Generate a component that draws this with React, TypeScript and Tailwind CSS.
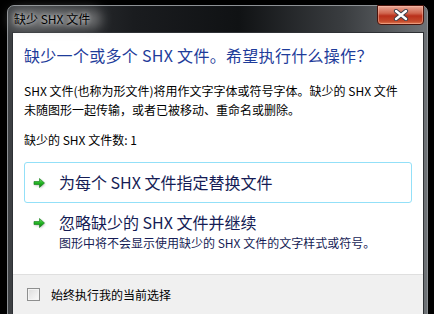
import React from 'react';

const cjk = { fontFamily: '"Noto Sans CJK SC", "Noto Sans", sans-serif' };

// green command-link arrow
function GoArrow() {
    return (
        <svg width="14" height="13" viewBox="0 0 14 13" className="shrink-0">
            <defs>
                <linearGradient id="ga" x1="0" y1="0" x2="0" y2="1">
                    <stop offset="0" stopColor="#6ee06a" />
                    <stop offset="0.5" stopColor="#22b422" />
                    <stop offset="1" stopColor="#0b7d12" />
                </linearGradient>
                <filter id="gs" x="-30%" y="-30%" width="160%" height="160%">
                    <feGaussianBlur stdDeviation="0.9" />
                </filter>
            </defs>
            <path d="M1.5 5.5h5.5V2.5l5 4.5-5 4.5V8.5H1.5z" fill="#9a9a9a" opacity="0.7" filter="url(#gs)" />
            <path d="M1 4.5h5.5V1.5l5 4.5-5 4.5V7.5H1z" fill="url(#ga)" stroke="#0e7a14" strokeWidth="0.6" />
        </svg>
    );
}

function CommandLink({ title, note, active }: { title: string; note?: string; active?: boolean }) {
    return (
        <div
            className={`flex items-start gap-[12px] rounded-[3px] border pl-[8px] pr-3 ${
                active ? 'border-[#93e0f8] py-[10px]' : 'border-transparent py-[6px]'
            }`}
        >
            <div className="pt-[4px]">
                <GoArrow />
            </div>
            <div className="flex flex-col text-[#151c55]">
                <span className="text-[16px] leading-[19px]">{title}</span>
                {note && <span className="mt-[3px] text-[12px] leading-[16px]">{note}</span>}
            </div>
        </div>
    );
}

export default function App() {
    return (
        <div className="h-[314px] w-[434px] overflow-hidden bg-black pl-[7px] pt-[5px]" style={cjk}>
            <div className="relative h-[320px] w-[421px] rounded-t-[7px] border border-[#8d9195] bg-[linear-gradient(90deg,#3e4144_0%,#1a1c1f_30%,#101214_55%,#3a3d40_80%,#6e7276_100%)]">
                {/* title bar */}
                <div className="relative flex h-[26px] items-center pl-[6px]">
                    <span className="absolute left-[2px] top-[3px] h-[20px] w-[92px] rounded-full bg-[#c8c8c8]/45 blur-[6px]" />
                    <span className="relative text-[12px] leading-[16px] text-black [text-shadow:0_0_4px_rgba(255,255,255,0.9)]">
                        缺少 SHX 文件
                    </span>
                </div>

                {/* close button */}
                <div className="absolute right-[3px] top-[-1px] flex h-[20px] w-[47px] items-center justify-center rounded-b-[4px] border border-[#4a140c] bg-[linear-gradient(180deg,#e9a795_0%,#d0664f_40%,#b9301b_55%,#c44a2c_85%,#e07a52_100%)] shadow-[inset_0_0_0_1px_rgba(255,200,180,0.45)]">
                    <svg width="16" height="12" viewBox="0 0 16 12">
                        <path d="M3 2l10 8M13 2L3 10" stroke="#3a3f4a" strokeWidth="4.2" strokeLinecap="round" />
                        <path d="M3 2l10 8M13 2L3 10" stroke="#ffffff" strokeWidth="2.4" strokeLinecap="round" />
                    </svg>
                </div>

                {/* client area */}
                <div className="pl-[4px] pr-[3px]">
                    <div className="flex h-[300px] flex-col border border-[#2e3135] bg-white">
                        <div className="flex flex-col px-[11px] pt-[11px]">
                            <div className="text-[16px] leading-[22px] text-[#1e3c9a] tracking-[0.3px]">
                                缺少一个或多个 SHX 文件。希望执行什么操作？
                            </div>
                            <div className="mt-[15px] text-[12px] leading-[19px] text-black">
                                <p>SHX 文件(也称为形文件)将用作文字字体或符号字体。缺少的 SHX 文件</p>
                                <p>未随图形一起传输，或者已被移动、重命名或删除。</p>
                            </div>
                            <div className="mt-[11px] text-[12px] leading-[19px] text-black">缺少的 SHX 文件数: 1</div>

                            <div className="mt-[13px] flex flex-col gap-[3px]">
                                <CommandLink title="为每个 SHX 文件指定替换文件" active />
                                <CommandLink
                                    title="忽略缺少的 SHX 文件并继续"
                                    note="图形中将不会显示使用缺少的 SHX 文件的文字样式或符号。"
                                />
                            </div>
                        </div>

                        {/* footer */}
                        <div className="mt-[16px] flex flex-1 items-start gap-[11px] border-t border-[#dfdfdf] bg-[#f0f0f0] pl-[14px] pt-[13px]">
                            <span className="h-[13px] w-[13px] border border-[#8e8f8f] bg-[linear-gradient(135deg,#dcdcdc,#fbfbfb)] shadow-[inset_0_0_0_1px_#f4f4f4]" />
                            <span className="text-[12px] leading-[14px] text-black">始终执行我的当前选择</span>
                        </div>
                    </div>
                </div>
            </div>
        </div>
    );
}
